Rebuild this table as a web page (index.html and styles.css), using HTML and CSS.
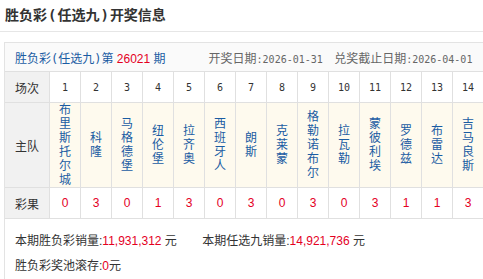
FILE: index.html
```html
<!DOCTYPE html>
<html lang="zh-CN">
<head>
<meta charset="utf-8">
<title>胜负彩(任选九)开奖信息</title>
<link rel="stylesheet" href="styles.css">
</head>
<body>
<div class="page">
  <h2 class="title">胜负彩<span class="paren">(</span>任选九<span class="paren">)</span>开奖信息</h2>
  <div class="box">
    <div class="box-head">
      <span class="issue">胜负彩<span class="paren">(</span>任选九<span class="paren">)</span>第 <em class="red">26021</em> 期</span>
      <span class="dates">
        <span class="date">开奖日期<span class="mono">:2026-01-31</span></span>
        <span class="date date-2">兑奖截止日期<span class="mono">:2026-04-01</span></span>
      </span>
    </div>
    <table class="grid">
      <tr class="row-no">
        <th>场次</th>
        <td>1</td><td>2</td><td>3</td><td>4</td><td>5</td><td>6</td><td>7</td>
        <td>8</td><td>9</td><td>10</td><td>11</td><td>12</td><td>13</td><td>14</td>
      </tr>
      <tr class="row-team">
        <th>主队</th>
        <td><div class="vt">布里斯托尔城</div></td>
        <td><div class="vt">科隆</div></td>
        <td><div class="vt">马格德堡</div></td>
        <td><div class="vt">纽伦堡</div></td>
        <td><div class="vt">拉齐奥</div></td>
        <td><div class="vt">西班牙人</div></td>
        <td><div class="vt">朗斯</div></td>
        <td><div class="vt">克莱蒙</div></td>
        <td><div class="vt">格勒诺布尔</div></td>
        <td><div class="vt">拉瓦勒</div></td>
        <td><div class="vt">蒙彼利埃</div></td>
        <td><div class="vt">罗德兹</div></td>
        <td><div class="vt">布雷达</div></td>
        <td><div class="vt">吉马良斯</div></td>
      </tr>
      <tr class="row-result">
        <th>彩果</th>
        <td>0</td><td>3</td><td>0</td><td>1</td><td>3</td><td>0</td><td>3</td>
        <td>0</td><td>3</td><td>0</td><td>3</td><td>1</td><td>1</td><td>3</td>
      </tr>
    </table>
    <div class="sales">
      <p class="line">
        <span>本期胜负彩销量:<span class="red num">11,931,312</span> 元</span>
        <span class="second">本期任选九销量:<span class="red num">14,921,736</span> 元</span>
      </p>
      <p class="line">胜负彩奖池滚存:<span class="red num">0</span>元</p>
    </div>
  </div>
</div>
</body>
</html>
```

FILE: styles.css
```css
html, body {
  margin: 0;
  padding: 0;
  overflow: hidden;
  background: #fff;
}

body {
  font-family: "Liberation Sans", "Noto Sans CJK SC", sans-serif;
  font-size: 12px;
  color: #333;
}

.page {
  width: 483px;
}

.title {
  margin: 0;
  height: 31px;
  line-height: 31px;
  padding-left: 5px;
  font-size: 14px;
  font-weight: bold;
  color: #333;
  border-bottom: 1px solid #e6e6e6;
  white-space: nowrap;
}

.paren {
  font-family: "DejaVu Sans Mono", monospace;
  font-weight: normal;
}

.title .paren {
  padding: 0 1px;
  font-weight: bold;
}

.box {
  margin: 10px 0 0 4px;
  width: 490px;
  border: 1px solid #e3e3e3;
  border-bottom: none;
}

.box-head {
  display: flex;
  align-items: center;
  height: 28px;
  padding-left: 10px;
  background: #fafafa;
  border-bottom: 1px solid #e0e0e0;
  white-space: nowrap;
}

.issue {
  color: #1a5ca3;
}

.red {
  color: #e4001f;
  font-style: normal;
}

.dates {
  margin-left: 43px;
  color: #666;
}

.date-2 {
  margin-left: 8px;
}

.mono {
  font-family: "DejaVu Sans Mono", monospace;
  font-size: 10px;
}

.grid {
  border-collapse: separate;
  border-spacing: 0;
  table-layout: fixed;
  width: 479px;
}

.grid th,
.grid td {
  padding: 0;
  border-right: 1px solid #e0e0e0;
  border-bottom: 1px solid #e0e0e0;
  text-align: center;
  vertical-align: middle;
  font-weight: normal;
}

.grid th {
  width: 44px;
  background: #f1f1f1;
  color: #333;
}

.grid td {
  width: 30px;
}

.row-no th,
.row-no td,
.row-result th,
.row-result td {
  height: 30px;
}

.row-no td {
  font-family: "DejaVu Sans Mono", monospace;
  font-size: 10px;
  color: #333;
}

.row-team td {
  height: 84px;
  background: #fefaee;
  color: #1a5ca3;
}

.vt {
  width: 12px;
  margin: 0 auto;
  line-height: 14px;
  word-break: break-all;
}

.row-result td {
  color: #e4001f;
}

.sales {
  padding: 10px 0 0 10px;
}

.line {
  margin: 0;
  line-height: 25px;
  white-space: nowrap;
}

.second {
  margin-left: 22px;
}
```
